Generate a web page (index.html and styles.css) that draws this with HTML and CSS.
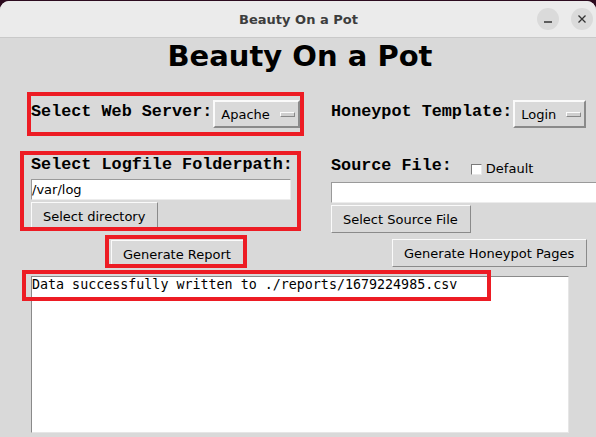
FILE: index.html
```html
<!DOCTYPE html>
<html>
<head>
<meta charset="utf-8">
<title>Beauty On a Pot</title>
<link rel="stylesheet" href="styles.css">
</head>
<body>
<div class="window">
  <header class="titlebar">
    <span class="spacer"></span>
    <div class="title">Beauty On a Pot</div>
    <div class="controls">
      <span class="ctl"><svg width="22" height="22" viewBox="0 0 22 22"><line x1="7" y1="14" x2="15" y2="14" stroke="#333" stroke-width="1.4"/></svg></span>
      <span class="ctl"><svg width="22" height="22" viewBox="0 0 22 22"><path d="M7.5 7.5 L14.5 14.5 M14.5 7.5 L7.5 14.5" stroke="#333" stroke-width="1.3" fill="none"/></svg></span>
    </div>
  </header>
  <main class="app">
    <h1 class="heading">Beauty On a Pot</h1>
    <div class="grid">
      <div class="server annot">
        <span class="lbl">Select Web Server:</span>
        <span class="option"><span>Apache</span><i class="ind"></i></span>
      </div>
      <div class="template">
        <span class="lbl">Honeypot Template:</span>
        <span class="option"><span>Login</span><i class="ind"></i></span>
      </div>
      <div class="frame annot">
        <div class="lbl">Select Logfile Folderpath:</div>
        <div class="entry">/var/log</div>
        <button class="btn">Select directory</button>
      </div>
      <div class="source">
        <div class="source-head">
          <span class="lbl">Source File:</span>
          <span class="check"></span>
          <span class="check-lbl">Default</span>
        </div>
        <div class="entry wide"></div>
        <button class="btn">Select Source File</button>
      </div>
      <div class="report annot"><button class="btn">Generate Report</button></div>
      <div class="pages"><button class="btn">Generate Honeypot Pages</button></div>
    </div>
    <div class="output">
      <div class="line">Data successfully written to ./reports/1679224985.csv</div>
      <div class="annot-box"></div>
    </div>
  </main>
</div>
</body>
</html>
```

FILE: styles.css
```css
html, body {
  margin: 0;
  padding: 0;
  width: 596px;
  height: 437px;
  overflow: hidden;
  background: #2c0b1f;
  font-family: "DejaVu Sans", sans-serif;
}

.window {
  margin-top: 1px;
  height: 436px;
  background: #d9d9d9;
  border-radius: 9px 9px 0 0;
  overflow: hidden;
  display: flex;
  flex-direction: column;
}

.titlebar {
  height: 36px;
  flex: 0 0 36px;
  background: #ebebeb;
  border-bottom: 1px solid #c9c9c9;
  display: grid;
  grid-template-columns: 1fr auto 1fr;
  align-items: center;
}

.title {
  font-family: "DejaVu Sans", sans-serif;
  font-weight: bold;
  font-size: 13px;
  color: #3d3d3d;
  margin-left: 1px;
}

.controls {
  justify-self: end;
  display: flex;
  gap: 12px;
  margin-right: 3px;
}

.ctl {
  width: 22px;
  height: 22px;
  border-radius: 50%;
  background: #dadada;
  display: block;
}

.ctl svg {
  display: block;
}

.app {
  flex: 1;
  display: flex;
  flex-direction: column;
}

.heading {
  margin: 1px 0 0;
  font-family: "DejaVu Sans", sans-serif;
  font-weight: bold;
  font-size: 29px;
  line-height: 34px;
  text-align: center;
  color: #000;
  padding-left: 4px;
}

.grid {
  display: grid;
  grid-template-columns: 300px 1fr;
  padding-left: 31px;
  margin-top: 19px;
  align-items: start;
}

.lbl {
  font-family: "Liberation Mono", "Courier New", monospace;
  font-weight: bold;
  font-size: 16.8px;
  line-height: 19px;
  color: #000;
  white-space: nowrap;
}

.annot {
  border: 4px solid #ed1c24;
  box-sizing: border-box;
}

.server {
  justify-self: start;
  margin-left: -4px;
  display: flex;
  align-items: flex-start;
  gap: 1px;
  padding: 4px 0;
}

.server .lbl,
.template .lbl {
  margin-top: 2px;
}

.template {
  align-self: center;
  display: flex;
  align-items: flex-start;
  gap: 1px;
}

.option {
  height: 28px;
  box-sizing: border-box;
  display: flex;
  align-items: center;
  gap: 10px;
  padding: 0 3px 0 6px;
  border: 2px solid;
  border-color: #fafafa #8a8a8a #8a8a8a #fafafa;
  background: #d9d9d9;
  font-size: 13px;
  line-height: 15px;
  color: #000;
}

.ind {
  display: block;
  width: 15px;
  height: 5px;
  box-sizing: border-box;
  border: 1px solid;
  border-color: #fcfcfc #888 #888 #fcfcfc;
  background: #cfcfcf;
}

.frame {
  margin-top: 15px;
  margin-left: -11px;
  width: 281px;
  height: 80px;
  padding: 0 6px 0 7px;
  overflow: hidden;
  display: flex;
  flex-direction: column;
  align-items: flex-start;
}

.entry {
  align-self: stretch;
  height: 21px;
  box-sizing: border-box;
  background: #fff;
  border: 1px solid;
  border-color: #9a9a9a #ececec #ececec #9a9a9a;
  font-size: 13px;
  line-height: 19px;
  color: #000;
  margin-top: 5px;
  white-space: nowrap;
}

.btn {
  display: block;
  height: 28px;
  box-sizing: border-box;
  padding: 0 12px 0 11px;
  border: 1px solid;
  border-color: #fafafa #8a8a8a #8a8a8a #fafafa;
  background: #d9d9d9;
  font-family: "DejaVu Sans", sans-serif;
  font-size: 13px;
  line-height: 15px;
  color: #000;
  white-space: nowrap;
  flex: 0 0 auto;
}

.frame .btn {
  margin-top: 2px;
}

.source {
  margin-top: 15px;
  padding-top: 5px;
  display: flex;
  flex-direction: column;
  align-items: flex-start;
}

.source-head {
  height: 24px;
  display: flex;
  align-items: flex-start;
}

.check {
  display: block;
  width: 11px;
  height: 11px;
  box-sizing: border-box;
  margin: 8px 0 0 19px;
  background: #fff;
  border: 1px solid;
  border-color: #7a7a7a #e8e8e8 #e8e8e8 #7a7a7a;
}

.check-lbl {
  margin: 5px 0 0 4px;
  font-size: 13px;
  line-height: 15px;
  color: #000;
}

.entry.wide {
  width: 280px;
  flex: 0 0 21px;
  margin-top: 2px;
}

.source .btn {
  margin-top: 2px;
}

.report {
  margin-top: 2px;
  margin-left: 74px;
  justify-self: start;
  width: 142px;
  height: 33px;
  padding: 1px 0 0 2px;
  overflow: hidden;
}

.pages {
  margin-top: 6px;
  margin-left: 61px;
  justify-self: start;
}

.output {
  position: relative;
  margin: 8px 0 0 31px;
  width: 538px;
  height: 157px;
  box-sizing: border-box;
  background: #fff;
  border: 1px solid;
  border-color: #8a8a8a #e6e6e6 #e6e6e6 #8a8a8a;
}

.line {
  font-family: "DejaVu Sans Mono", monospace;
  font-size: 13.33px;
  line-height: 16px;
  color: #000;
  white-space: pre;
}

.annot-box {
  position: absolute;
  left: -10px;
  top: -7px;
  width: 469px;
  height: 31px;
  box-sizing: border-box;
  border: 4px solid #ed1c24;
  pointer-events: none;
}
```
